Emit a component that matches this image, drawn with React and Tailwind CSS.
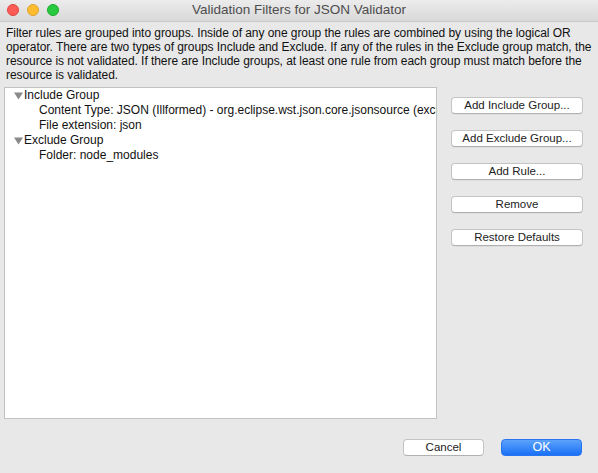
import React from "react";

function Btn({ children }) {
  return (
    <button className="h-[17px] w-[132px] rounded-[4px] border border-[#c4c4c4] border-b-[#b0b0b0] bg-white text-[11.5px] leading-[15px] text-[#222] shadow-[0_0.5px_0.5px_rgba(0,0,0,0.08)]">
      {children}
    </button>
  );
}

function Tri() {
  return (
    <svg width="9" height="8" viewBox="0 0 9 8" className="ml-[9px] mr-[1px]">
      <path d="M0 0.5 L9 0.5 L4.5 7.5 Z" fill="#8a8a8a" />
    </svg>
  );
}

export default function App() {
  return (
    <div className="flex h-[473px] w-[598px] flex-col overflow-hidden bg-[#e8e8e8] font-['Liberation_Sans',sans-serif]">
      <div className="relative flex h-[22px] shrink-0 items-center justify-center border-b border-[#c9c9c9] bg-gradient-to-b from-[#ececec] to-[#d8d8d8]">
        <div className="absolute left-[7px] top-[4px] flex gap-[8px]">
          <div className="h-[12px] w-[12px] rounded-full border border-[#e0443e] bg-[#fd5b55]" />
          <div className="h-[12px] w-[12px] rounded-full border border-[#dea236] bg-[#febc2e]" />
          <div className="h-[12px] w-[12px] rounded-full border border-[#1aab29] bg-[#28c840]" />
        </div>
        <span className="text-[13.5px] text-[#4d4d4d]">Validation Filters for JSON Validator</span>
      </div>
      <p className="pl-[6px] pr-0 pt-[4px] text-[12px] leading-[14px] tracking-[-0.06px] text-[#111]">
        Filter rules are grouped into groups. Inside of any one group the rules are combined by using the logical OR operator. There are two types of groups Include and Exclude. If any of the rules in the Exclude group match, the resource is not validated. If there are Include groups, at least one rule from each group must match before the resource is validated.
      </p>
      <div className="mt-[5px] flex pl-[4px]">
        <div className="h-[332px] w-[433px] overflow-hidden border border-[#c2c2c2] bg-white text-[12px] leading-[15px] text-[#111]">
          <div className="flex items-center whitespace-nowrap"><Tri />Include Group</div>
          <div className="whitespace-nowrap pl-[34px]">Content Type: JSON (Illformed) - org.eclipse.wst.json.core.jsonsource (excluded)</div>
          <div className="whitespace-nowrap pl-[34px]">File extension: json</div>
          <div className="flex items-center whitespace-nowrap"><Tri />Exclude Group</div>
          <div className="whitespace-nowrap pl-[34px]">Folder: node_modules</div>
        </div>
        <div className="ml-[14px] mt-[10px] flex flex-col gap-[16px]">
          <Btn>Add Include Group...</Btn>
          <Btn>Add Exclude Group...</Btn>
          <Btn>Add Rule...</Btn>
          <Btn>Remove</Btn>
          <Btn>Restore Defaults</Btn>
        </div>
      </div>
      <div className="mt-[20px] flex justify-end gap-[17px] pr-[16px]">
        <button className="h-[17px] w-[81px] rounded-[4px] border border-[#c4c4c4] border-b-[#b0b0b0] bg-white text-[11.5px] leading-[15px] text-[#222]">Cancel</button>
        <button className="h-[17px] w-[81px] rounded-[4px] border border-[#2a74f0] bg-gradient-to-b from-[#5ba2fb] to-[#1770f6] text-[12.5px] leading-[15px] text-white">OK</button>
      </div>
    </div>
  );
}
